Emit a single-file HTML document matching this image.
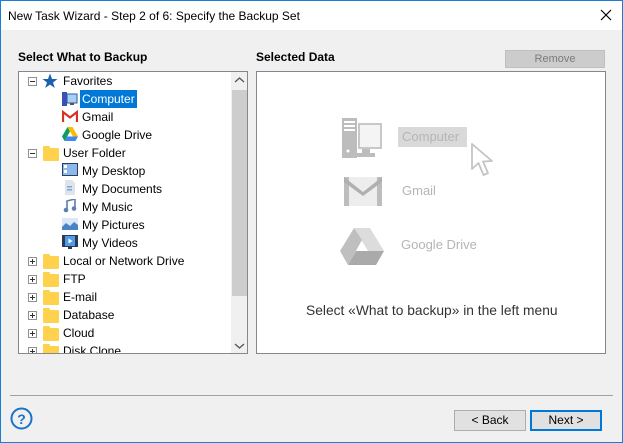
<!DOCTYPE html>
<html><head><style>
*{margin:0;padding:0;box-sizing:border-box}
body{width:623px;height:443px;background:#f0f0f0;font-family:"Liberation Sans",sans-serif;font-size:12px;color:#000;position:relative;overflow:hidden}
.win{position:absolute;left:0;top:0;width:623px;height:443px;border:1px solid #1a7fd4}
.title{position:absolute;left:1px;top:1px;width:621px;height:29px;background:#fff}
.title span{position:absolute;left:7px;top:8px;font-size:12px}
.abs{position:absolute}
.hdr{font-weight:bold;font-size:12px}
.box{position:absolute;background:#fff;border:1px solid #828790}
.row{position:absolute;height:18px;line-height:18px;white-space:nowrap}
.pm{position:absolute;width:9px;height:9px;border:1px solid #919191;background:#fff}
.pm:before{content:"";position:absolute;left:1px;top:3px;width:5px;height:1px;background:#333}
.pm.p:after{content:"";position:absolute;left:3px;top:1px;width:1px;height:5px;background:#333}
.fold{position:absolute;width:16px;height:13px;background:#ffd24d;border-radius:1px}
.fold:before{content:"";position:absolute;left:0;top:-2px;width:7px;height:3px;background:#ffd24d;border-radius:1px 1px 0 0}
.btn{position:absolute;background:#e1e1e1;border:1px solid #adadad;text-align:center;line-height:19px}
</style></head><body>
<div class="win"></div>
<div class="title"><span>New Task Wizard - Step 2 of 6: Specify the Backup Set</span>
<svg class="abs" style="left:598px;top:7px" width="14" height="14"><path d="M2 2L12 12M12 2L2 12" stroke="#000" stroke-width="1.2"/></svg></div>

<div class="abs hdr" style="left:18px;top:50px">Select What to Backup</div>
<div class="abs hdr" style="left:256px;top:50px">Selected Data</div>
<div class="btn" style="left:505px;top:50px;width:100px;height:18px;line-height:16px;background:#ccc;border-color:#bfbfbf;color:#7a7a7a;font-size:11px">Remove</div>

<div class="box" style="left:18px;top:71px;width:230px;height:283px;overflow:hidden">
 <div class="abs" style="left:212px;top:0;width:17px;height:281px;background:#f0f0f0"></div>
 <div class="abs" style="left:213px;top:18px;width:15px;height:206px;background:#cdcdcd"></div>
 <svg class="abs" style="left:215px;top:4px" width="11" height="8"><path d="M1 6L5.5 2L10 6" stroke="#555" fill="none" stroke-width="1.3"/></svg>
 <svg class="abs" style="left:215px;top:270px" width="11" height="8"><path d="M1 2L5.5 6L10 2" stroke="#555" fill="none" stroke-width="1.3"/></svg>

 <div class="pm" style="left:9px;top:5px"></div>
 <svg class="abs" style="left:23px;top:1px" width="16" height="16"><path d="M8 0.5L10 6L15.5 6L11 9.5L12.8 15L8 11.6L3.2 15L5 9.5L0.5 6L6 6Z" fill="#1c5fae"/></svg>
 <div class="row" style="left:44px;top:0">Favorites</div>

 <svg class="abs" style="left:43px;top:19px" width="16" height="16"><rect x="0" y="1" width="5" height="14" fill="#3b4fb5"/><rect x="5" y="3" width="10" height="9" fill="#a8d0f5" stroke="#2b5aa8"/><rect x="8" y="12" width="4" height="2" fill="#555"/></svg>
 <div class="row" style="left:61px;top:18px;background:#0078d7;color:#fff;padding:0 2px">Computer</div>

 <svg class="abs" style="left:43px;top:38px" width="16" height="13"><path d="M1 12V2L8 7.5L15 2V12" stroke="#d93025" stroke-width="2.2" fill="none"/></svg>
 <div class="row" style="left:63px;top:36px">Gmail</div>

 <svg class="abs" style="left:43px;top:55px" width="16" height="14"><path d="M5.5 0H10.5L16 9.5H11Z" fill="#fbbc04"/><path d="M5.5 0L0 9.5L2.5 14L8 4.5Z" fill="#0f9d58"/><path d="M2.5 14H13.5L16 9.5H5Z" fill="#4285f4"/></svg>
 <div class="row" style="left:63px;top:54px">Google Drive</div>

 <div class="pm" style="left:9px;top:77px"></div>
 <div class="fold" style="left:24px;top:76px"></div>
 <div class="row" style="left:44px;top:72px">User Folder</div>

 <svg class="abs" style="left:43px;top:91px" width="16" height="14"><rect x="0.5" y="0.5" width="15" height="12" fill="#8db8ec" stroke="#2a3f66"/><rect x="2" y="2" width="3" height="3" fill="#fff"/><rect x="2" y="7" width="3" height="3" fill="#fff"/></svg>
 <div class="row" style="left:63px;top:90px">My Desktop</div>
 <svg class="abs" style="left:45px;top:108px" width="12" height="15"><path d="M1 0H8L11 3V15H1Z" fill="#dfe3ea"/><rect x="3" y="6" width="5" height="1.5" fill="#7aa7de"/><rect x="3" y="9" width="5" height="1.5" fill="#7aa7de"/></svg>
 <div class="row" style="left:63px;top:108px">My Documents</div>
 <svg class="abs" style="left:44px;top:127px" width="14" height="14"><path d="M4 11V2L12 0V9" stroke="#5b7fae" stroke-width="1.6" fill="none"/><circle cx="3" cy="11" r="2.3" fill="#5b7fae"/><circle cx="11" cy="9.5" r="2.3" fill="#5b7fae"/></svg>
 <div class="row" style="left:63px;top:126px">My Music</div>
 <svg class="abs" style="left:43px;top:146px" width="16" height="12"><rect width="16" height="12" fill="#dce8f7"/><path d="M0 9L4 5L8 8L12 4L16 7V12H0Z" fill="#4a83c8"/></svg>
 <div class="row" style="left:63px;top:144px">My Pictures</div>
 <svg class="abs" style="left:43px;top:163px" width="16" height="14"><rect width="16" height="12" fill="#2b3a52"/><rect x="3" y="1" width="10" height="10" fill="#4f9be8"/><path d="M6.5 3.5V8.5L10.5 6Z" fill="#fff"/><rect x="6" y="12" width="4" height="2" fill="#2b3a52"/></svg>
 <div class="row" style="left:63px;top:162px">My Videos</div>

 <div class="pm p" style="left:9px;top:185px"></div><div class="fold" style="left:24px;top:184px"></div><div class="row" style="left:44px;top:180px">Local or Network Drive</div>
 <div class="pm p" style="left:9px;top:203px"></div><div class="fold" style="left:24px;top:202px"></div><div class="row" style="left:44px;top:198px">FTP</div>
 <div class="pm p" style="left:9px;top:221px"></div><div class="fold" style="left:24px;top:220px"></div><div class="row" style="left:44px;top:216px">E-mail</div>
 <div class="pm p" style="left:9px;top:239px"></div><div class="fold" style="left:24px;top:238px"></div><div class="row" style="left:44px;top:234px">Database</div>
 <div class="pm p" style="left:9px;top:257px"></div><div class="fold" style="left:24px;top:256px"></div><div class="row" style="left:44px;top:252px">Cloud</div>
 <div class="pm p" style="left:9px;top:275px"></div><div class="fold" style="left:24px;top:274px"></div><div class="row" style="left:44px;top:270px">Disk Clone</div>
</div>

<div class="box" style="left:256px;top:71px;width:350px;height:283px">
 <svg class="abs" style="left:85px;top:46px" width="42" height="42"><rect x="0" y="0" width="15" height="40" fill="#bdbdbd"/><rect x="2" y="3" width="11" height="2" fill="#fff"/><rect x="2" y="7" width="11" height="2" fill="#fff"/><rect x="2" y="11" width="11" height="2" fill="#fff"/><circle cx="6" cy="33" r="1.5" fill="#fff"/><rect x="17" y="6" width="22" height="24" fill="#f4f4f4" stroke="#c8c8c8" stroke-width="2"/><rect x="20" y="31" width="8" height="4" fill="#bdbdbd"/><rect x="15" y="35" width="18" height="4" fill="#bdbdbd"/></svg>
 <div class="abs" style="left:141px;top:55px;width:69px;height:20px;background:#d9d9d9;color:#b5b5b5;font-size:13px;line-height:20px;padding-left:4px">Computer</div>
 <svg class="abs" style="left:213px;top:70px" width="30" height="38"><path d="M2 2L2 27L8.5 21L13.5 33L18 31L13 19.5L22 19Z" fill="#fff" stroke="#c4c4c4" stroke-width="1.8" stroke-linejoin="round"/></svg>
 <svg class="abs" style="left:87px;top:105px" width="38" height="30"><rect x="0" y="0" width="38" height="29" fill="#ededed"/><path d="M0 0H5V29H0ZM33 0H38V29H33Z" fill="#bdbdbd"/><path d="M0 0L19 15L38 0V5L19 19L0 5Z" fill="#b0b0b0"/></svg>
 <div class="abs" style="left:145px;top:111px;color:#b5b5b5;font-size:13px">Gmail</div>
 <svg class="abs" style="left:83px;top:156px" width="44" height="38"><path d="M14 0H30L44 23H28Z" fill="#dcdcdc"/><path d="M14 0L0 23L8 37L22 12Z" fill="#bfbfbf"/><path d="M8 37H36L44 23H16Z" fill="#aaa"/></svg>
 <div class="abs" style="left:144px;top:165px;color:#b5b5b5;font-size:13px">Google Drive</div>
 <div class="abs" style="left:49px;top:231px;color:#333;font-size:13.8px;white-space:nowrap">Select «What to backup» in the left menu</div>
</div>

<div class="abs" style="left:10px;top:395px;width:603px;height:1px;background:#a0a0a0"></div>
<svg class="abs" style="left:10px;top:407px" width="24" height="24"><circle cx="11.5" cy="11.5" r="10" fill="none" stroke="#1a73c8" stroke-width="2"/><text x="11.5" y="17" text-anchor="middle" font-family="Liberation Sans" font-weight="bold" font-size="14" fill="#1a73c8">?</text></svg>
<div class="btn" style="left:454px;top:410px;width:72px;height:21px">&lt; Back</div>
<div class="btn" style="left:530px;top:410px;width:72px;height:21px;border:2px solid #0078d7;line-height:17px">Next &gt;</div>
</body></html>
